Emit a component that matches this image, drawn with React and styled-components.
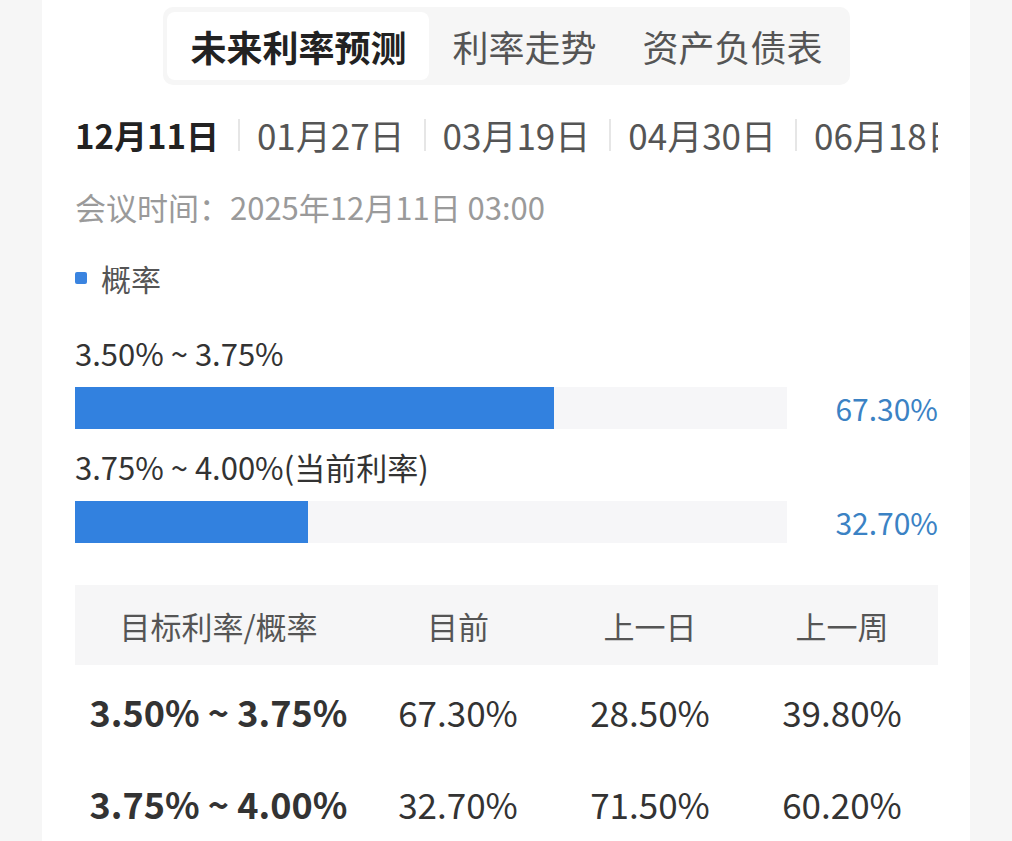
import styled, { createGlobalStyle } from 'styled-components'

const GlobalStyle = createGlobalStyle`
	body {
		margin: 0;
		background: #f6f6f6;
		font-family: "Noto Sans CJK SC", "Noto Sans", sans-serif;
	}
`

const tabs = ['未来利率预测', '利率走势', '资产负债表']
const dates = ['12月11日', '01月27日', '03月19日', '04月30日', '06月18日', '07月30日']

const bars = [
	{ label: '3.50% ~ 3.75%', value: 67.3 },
	{ label: '3.75% ~ 4.00%(当前利率)', value: 32.7 },
]

const rows = [
	['3.50% ~ 3.75%', '67.30%', '28.50%', '39.80%'],
	['3.75% ~ 4.00%', '32.70%', '71.50%', '60.20%'],
]

const App = () => {
	return (
		<>
			<GlobalStyle />
			<Card>
				<TabBarWrap>
					<TabBar>
						{tabs.map((t, i) => (
							<Tab key={t} active={i === 0}>{t}</Tab>
						))}
					</TabBar>
				</TabBarWrap>

				<DateRow>
					{dates.map((d, i) => (
						<DateItem key={d} active={i === 0} first={i === 0}>{d}</DateItem>
					))}
				</DateRow>

				<MeetingTime>会议时间：2025年12月11日 03:00</MeetingTime>

				<Legend>
					<LegendDot />
					概率
				</Legend>

				{bars.map(b => (
					<BarGroup key={b.label}>
						<BarLabel>{b.label}</BarLabel>
						<BarRow>
							<Track>
								<Fill style={{ width: `${b.value}%` }} />
							</Track>
							<BarValue>{b.value.toFixed(2)}%</BarValue>
						</BarRow>
					</BarGroup>
				))}

				<Table>
					<HeadRow>
						<HeadCell>目标利率/概率</HeadCell>
						<HeadCell>目前</HeadCell>
						<HeadCell>上一日</HeadCell>
						<HeadCell>上一周</HeadCell>
					</HeadRow>
					{rows.map(r => (
						<BodyRow key={r[0]}>
							{r.map((c, i) => (
								<BodyCell key={i} bold={i === 0}>{c}</BodyCell>
							))}
						</BodyRow>
					))}
				</Table>
			</Card>
		</>
	)
}

export default App

const Card = styled.div`
	margin-left: 42px;
	width: 928px;
	min-height: 841px;
	box-sizing: border-box;
	padding: 0 32px 0 33px;
	background: #fff;
	overflow: hidden;
`

const TabBarWrap = styled.div`
	display: flex;
	justify-content: center;
	padding-top: 7px;
`

const TabBar = styled.div`
	display: flex;
	padding: 5px 4px;
	background: #f6f6f6;
	border-radius: 10px;
`

const Tab = styled.div`
	height: 68px;
	display: flex;
	align-items: center;
	padding: 0 23px;
	font-size: 36px;
	font-weight: ${p => p.active ? 700 : 400};
	color: ${p => p.active ? '#222' : '#555'};
	background: ${p => p.active ? '#fff' : 'transparent'};
	border-radius: 8px;
`

const DateRow = styled.div`
	display: flex;
	align-items: center;
	height: 50px;
	margin-top: 25px;
	overflow: hidden;
	white-space: nowrap;
`

const DateItem = styled.div`
	flex-shrink: 0;
	font-size: ${p => p.active ? '33px' : '35px'};
	font-weight: ${p => p.active ? 700 : 400};
	color: ${p => p.active ? '#222' : '#555'};
	padding-left: ${p => p.first ? '0' : '17px'};
	margin-left: ${p => p.first ? '0' : '19px'};
	border-left: ${p => p.first ? 'none' : '2px solid #e6e6e6'};
	line-height: 32px;
`

const MeetingTime = styled.div`
	margin-top: 27px;
	height: 40px;
	line-height: 40px;
	font-size: 31px;
	color: #9a9a9a;
`

const Legend = styled.div`
	display: flex;
	align-items: center;
	gap: 14px;
	margin-top: 31px;
	height: 40px;
	font-size: 30px;
	color: #555;
`

const LegendDot = styled.span`
	width: 12px;
	height: 12px;
	border-radius: 2px;
	background: #3a84e0;
`

const BarGroup = styled.div`
	margin-top: 35px;

	& + & {
		margin-top: 17px;
	}
`

const BarLabel = styled.div`
	height: 40px;
	line-height: 40px;
	font-size: 31px;
	color: #333;
`

const BarRow = styled.div`
	display: flex;
	align-items: center;
	margin-top: 13px;
`

const Track = styled.div`
	width: 712px;
	height: 42px;
	background: #f6f6f8;
`

const Fill = styled.div`
	height: 100%;
	background: #3281df;
`

const BarValue = styled.div`
	flex: 1;
	text-align: right;
	font-size: 30px;
	color: #3b82c4;
`

const Table = styled.div`
	margin-top: 41px;
`

const HeadRow = styled.div`
	display: grid;
	grid-template-columns: 287px repeat(3, 1fr);
	height: 80px;
	align-items: center;
	background: #f6f6f7;
`

const HeadCell = styled.div`
	text-align: center;
	font-size: 31px;
	color: #555;
`

const BodyRow = styled.div`
	display: grid;
	grid-template-columns: 287px repeat(3, 1fr);
	height: 92px;
	align-items: center;
`

const BodyCell = styled.div`
	text-align: center;
	font-size: ${p => p.bold ? '36px' : '35px'};
	font-weight: ${p => p.bold ? 700 : 400};
	color: #333;
`
